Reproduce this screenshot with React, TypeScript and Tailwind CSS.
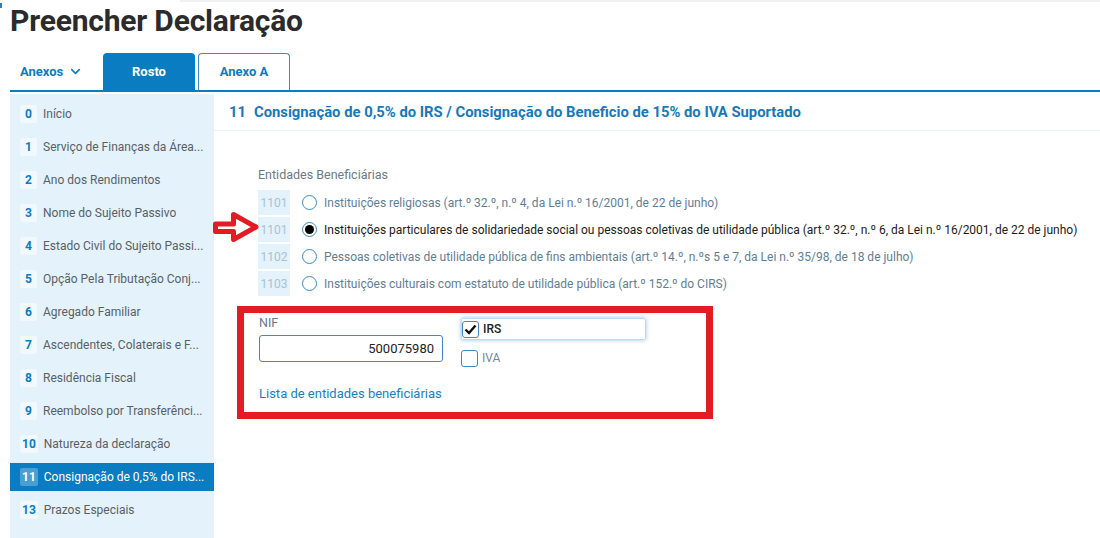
import { ChevronDown } from "lucide-react";

// section list on the left
const sections: { n: string; label: string }[] = [
  { n: "0", label: "Início" },
  { n: "1", label: "Serviço de Finanças da Área..." },
  { n: "2", label: "Ano dos Rendimentos" },
  { n: "3", label: "Nome do Sujeito Passivo" },
  { n: "4", label: "Estado Civil do Sujeito Passi..." },
  { n: "5", label: "Opção Pela Tributação Conj..." },
  { n: "6", label: "Agregado Familiar" },
  { n: "7", label: "Ascendentes, Colaterais e F..." },
  { n: "8", label: "Residência Fiscal" },
  { n: "9", label: "Reembolso por Transferênci..." },
  { n: "10", label: "Natureza da declaração" },
  { n: "11", label: "Consignação de 0,5% do IRS..." },
  { n: "13", label: "Prazos Especiais" }
];

const entities = [
  { code: "1101", text: "Instituições religiosas (art.º 32.º, n.º 4, da Lei n.º 16/2001, de 22 de junho)" },
  {
    code: "1101",
    text: "Instituições particulares de solidariedade social ou pessoas coletivas de utilidade pública (art.º 32.º, n.º 6, da Lei n.º 16/2001, de 22 de junho)",
    checked: true
  },
  { code: "1102", text: "Pessoas coletivas de utilidade pública de fins ambientais (art.º 14.º, n.ºs 5 e 7, da Lei n.º 35/98, de 18 de julho)" },
  { code: "1103", text: "Instituições culturais com estatuto de utilidade pública (art.º 152.º do CIRS)" }
];

function Radio({ checked }: { checked?: boolean }) {
  return (
    <span className="flex h-[15px] w-[15px] items-center justify-center rounded-full border-[1.5px] border-[#3b8ac3] bg-white">
      {checked && <span className="h-[9px] w-[9px] rounded-full bg-black" />}
    </span>
  );
}

function RedArrow() {
  return (
    <svg width="50" height="34" viewBox="0 0 50 34" className="absolute left-[211px] top-[210px]">
      <path
        d="M4.5 14 H22.5 V4.5 L45 17 L22.5 29.5 V21.5 H4.5 Z"
        fill="#fff"
        stroke="#e31b23"
        strokeWidth="5"
        strokeLinejoin="round"
      />
    </svg>
  );
}

export default function App() {
  return (
    <div className="relative h-[538px] w-[1100px] overflow-hidden bg-white font-['Roboto',sans-serif]">
      <div className="ml-[180px] h-[2px] bg-[#f0f0f0]" />
      <div className="absolute left-0 top-[3px] h-[5px] w-[2px] bg-[#2a7fc0]" />

      <h1 className="pl-[10px] pt-[2px] text-[30px] font-bold leading-[34px] tracking-[-0.2px] text-[#2b2b2b]">
        Preencher Declaração
      </h1>

      {/* tabs */}
      <div className="ml-[10px] mt-[15px] flex h-[39px] items-end border-b-2 border-[#0a7cc1]">
        <button className="flex h-full w-[93px] items-center gap-[5px] pl-[10px] text-[13px] font-bold text-[#0a7cc1]">
          Anexos
          <ChevronDown size={15} strokeWidth={2.5} />
        </button>
        <div className="flex h-full w-[92px] items-center justify-center rounded-t-[4px] bg-[#0a7cc1] text-[13px] font-bold text-white">
          Rosto
        </div>
        <div className="ml-[3px] flex h-full w-[92px] items-center justify-center rounded-t-[4px] border border-b-0 border-[#3b8ac3] bg-white text-[13px] font-bold text-[#0a7cc1]">
          Anexo A
        </div>
      </div>

      <div className="ml-[10px] mt-[2px] flex h-[444px]">
        {/* sidebar */}
        <nav className="flex w-[204px] shrink-0 flex-col gap-[5px] bg-[#e4f2fc] pt-[6px]">
          {sections.map((s) => {
            const active = s.n === "11";
            return (
              <div
                key={s.n}
                className={`flex h-7 items-center gap-[6px] pl-[10px] text-[12px] ${
                  active ? "bg-[#0a7cc1] text-white" : "text-[#5a5f66]"
                }`}
              >
                <span
                  className={`flex h-[18px] min-w-[17px] items-center justify-center rounded-[2px] px-[2px] text-[12px] font-bold ${
                    active ? "bg-[#4a9ed6] text-white" : "bg-[#f1f8fe] text-[#0a7cc1]"
                  }`}
                >
                  {s.n}
                </span>
                <span className="truncate">{s.label}</span>
              </div>
            );
          })}
        </nav>

        {/* section content */}
        <main className="flex-1">
          <div className="flex h-[37px] items-center gap-[8px] border-b border-[#eef3f8] pl-[15px] text-[14.8px] font-bold text-[#1479bd]">
            <span>11</span>
            <span>Consignação de 0,5% do IRS / Consignação do Beneficio de 15% do IVA Suportado</span>
          </div>

          <div className="pl-[44px] pt-[36px]">
            <div className="text-[12.5px] leading-4 text-[#6c7a86]">Entidades Beneficiárias</div>
            <div className="mt-[7px] flex flex-col gap-[2px]">
              {entities.map((e, i) => (
                <div key={i} className="flex h-[25px] items-center">
                  <span className="flex h-full w-[32px] items-center justify-center bg-[#e4f2fc] text-[12px] text-[#a9c1d3]">
                    {e.code}
                  </span>
                  <span className="ml-[12px]">
                    <Radio checked={e.checked} />
                  </span>
                  <span className={`ml-[7px] whitespace-nowrap text-[12px] ${e.checked ? "text-[#1c1c1c]" : "text-[#5f7e96]"}`}>
                    {e.text}
                  </span>
                </div>
              ))}
            </div>
          </div>

          <div className="ml-[23px] mt-[10px] w-[476px] border-[7px] border-[#e31b23] pb-[10px] pl-[15px] pt-[3px]">
            <div className="flex gap-[18px]">
              <div className="flex w-[184px] flex-col">
                <label className="text-[12.5px] leading-[14px] text-[#6c7a86]">NIF</label>
                <div className="mt-[5px] flex h-[27px] items-center justify-end rounded-[3px] border border-[#3b8ac3] pr-[8px] text-[13px] text-[#222]">
                  500075980
                </div>
              </div>
              <div className="flex flex-col pt-[2px]">
                <div className="flex h-[22px] w-[185px] items-center gap-[4px] rounded-[2px] border border-[#bcdcf2] shadow-[0_0_4px_rgba(70,150,210,0.55)]">
                  <span className="flex h-[17px] w-[17px] items-center justify-center rounded-[3px] border-[1.5px] border-[#3b8ac3] bg-white">
                    <svg width="13" height="11" viewBox="0 0 13 11">
                      <path d="M1.5 5.5 L5 9 L11.5 1.5" fill="none" stroke="#111" strokeWidth="2.4" />
                    </svg>
                  </span>
                  <span className="text-[12px] font-medium text-[#222]">IRS</span>
                </div>
                <div className="mt-[9px] flex items-center gap-[4px]">
                  <span className="h-[17px] w-[17px] rounded-[3px] border-[1.5px] border-[#3b8ac3] bg-white" />
                  <span className="text-[12px] text-[#6e8aa0]">IVA</span>
                </div>
              </div>
            </div>
            <a className="mt-[19px] block text-[13px] leading-4 text-[#1a7fc0]">Lista de entidades beneficiárias</a>
          </div>
        </main>
      </div>

      <RedArrow />
    </div>
  );
}
